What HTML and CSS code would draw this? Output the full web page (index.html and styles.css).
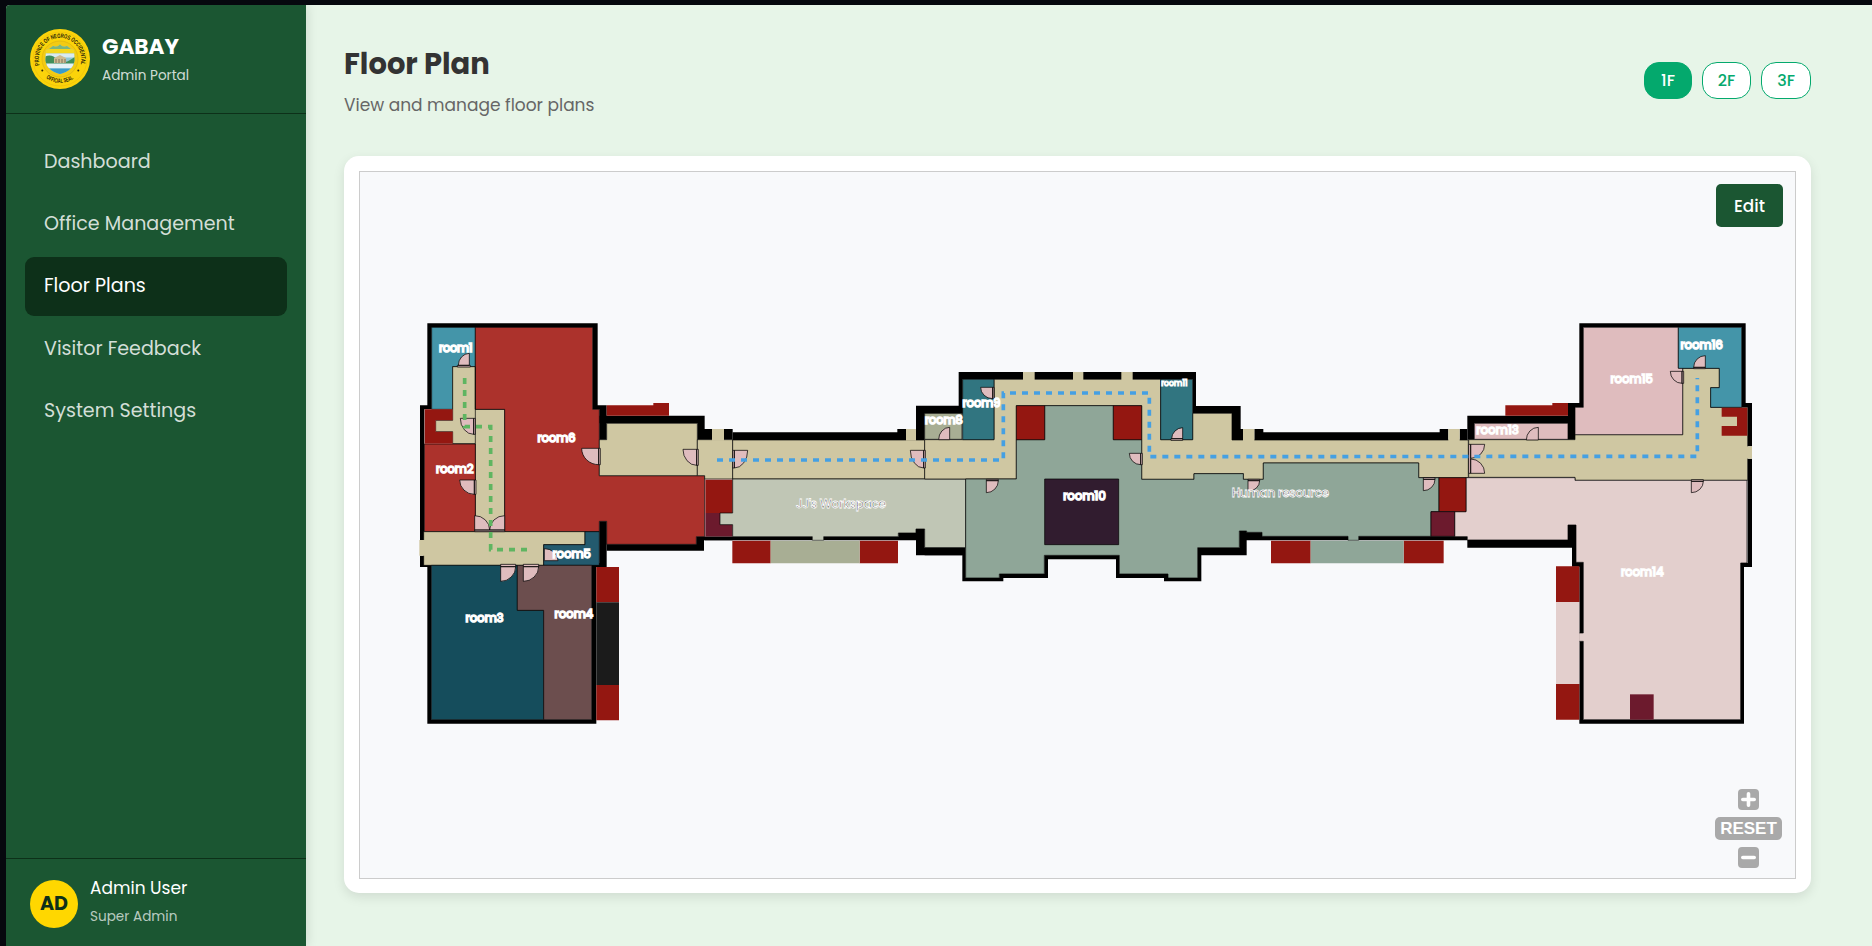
FILE: index.html
```html
<!DOCTYPE html>
<html lang="en">
<head>
<meta charset="utf-8">
<title>GABAY Admin Portal</title>
<link rel="stylesheet" href="styles.css">
</head>
<body>
<div class="app">
  <aside class="sidebar">
    <header class="brand">
      <svg class="seal" viewBox="0 0 60 60">
        <defs>
          <path id="arcTop" d="M10.200 38A21.300 21.300 0 1 1 49.800 38"/>
          <path id="arcBottom" d="M13 46.800A23.900 23.900 0 0 0 47 46.800"/>
          <clipPath id="shield"><path d="M16 21Q20 20 23 17Q27 19 30 15.500Q33 19 37 17Q40 20 44 21L44.500 31Q44 41 30 45Q16 41 15.500 31Z"/></clipPath>
        </defs>
        <circle cx="30" cy="30" r="30" fill="#fbd30a"/>
        <circle cx="30" cy="30" r="27" fill="none" stroke="#e6bb0d" stroke-width=".5"/>
        <circle cx="30" cy="30" r="18" fill="#f3cb13" stroke="#d9ae12" stroke-width=".6"/>
        <g clip-path="url(#shield)">
          <rect x="14" y="14" width="32" height="32" fill="#8fc6d4"/>
          <rect x="14" y="14" width="32" height="6" fill="#7db67c"/>
          <rect x="14" y="20" width="32" height="4.500" fill="#f4d71c"/>
          <rect x="14" y="24.500" width="32" height="4" fill="#d9eaf0"/>
          <path d="M14 28Q22 24 27 31T46 27V36H14Z" fill="#3f8e5a"/>
          <path d="M24 29L30 26L36 29V34H24Z" fill="#cdbb91"/>
          <path d="M26 30V34M29 30V34M32 30V34M35 30V34" stroke="#69604e" stroke-width=".8"/>
          <rect x="14" y="34.500" width="32" height="5" fill="#e4f2f7"/>
          <rect x="14" y="39.500" width="32" height="6" fill="#3a9bc8"/>
        </g>
        <circle cx="12.300" cy="41.500" r="1" fill="#2b2609"/><circle cx="48.300" cy="41.500" r="1" fill="#2b2609"/>
        <text class="seal-text"><textPath href="#arcTop" startOffset="2" textLength="78" lengthAdjust="spacingAndGlyphs">PROVINCE OF NEGROS OCCIDENTAL</textPath></text>
        <text class="seal-text"><textPath href="#arcBottom" startOffset="4" textLength="29" lengthAdjust="spacingAndGlyphs">OFFICIAL SEAL</textPath></text>
      </svg>
      <div class="brand-text">
        <div class="brand-name">GABAY</div>
        <div class="brand-sub">Admin Portal</div>
      </div>
    </header>
    <nav class="nav">
      <a class="nav-item">Dashboard</a>
      <a class="nav-item">Office Management</a>
      <a class="nav-item active">Floor Plans</a>
      <a class="nav-item">Visitor Feedback</a>
      <a class="nav-item">System Settings</a>
    </nav>
    <footer class="user">
      <div class="avatar">AD</div>
      <div class="user-text">
        <div class="user-name">Admin User</div>
        <div class="user-role">Super Admin</div>
      </div>
    </footer>
  </aside>
  <main class="main">
    <header class="page-head">
      <div class="titles">
        <h1 class="title">Floor Plan</h1>
        <p class="subtitle">View and manage floor plans</p>
      </div>
      <div class="floors">
        <button class="floor on">1F</button>
        <button class="floor">2F</button>
        <button class="floor">3F</button>
      </div>
    </header>
    <section class="card">
      <div class="canvas">
        <svg class="plan" viewBox="360 172 1435 706">
          <!-- west wing -->
          <g transform="translate(400 310) scale(.33333)">
            <g class="wall">
              <path d="M82 40H593V286H620V389H598V298H578V53H95V298H73V690H60V286H82Z"/>
              <path d="M60 737H72V759H94V1229H575V759H598V634H620V771H589V1241H82V771H60Z"/>
              <path d="M598 317H914V357H936V389H892V340H598Z"/>
              <path d="M620 703H889V680H998V691H912V722H620Z"/>
              <path d="M972 357H998V389H972Z"/>
            </g>
            <g class="rm">
              <path class="c-teal" d="M95 52H226V170H158V298H95Z"/>
              <path class="c-tan" d="M158 170H226V298H314V665H226V401H158V365H107V331H158Z"/>
              <path class="c-red" d="M226 52H578V298H598V497H914V680H889V703H620V634H598V665H314V298H226Z"/>
              <path class="c-red" d="M73 402H226V665H73Z"/>
              <path class="c-tan" d="M71 665H555V704H431V766H71Z"/>
              <path class="c-navy" d="M555 665H598V766H431V704H555Z"/>
              <path class="c-deep" d="M94 766H352V901H431V1229H94Z"/>
              <path class="c-brown" d="M352 766H575V1229H431V901H352Z"/>
              <path class="c-tan" d="M620 340H892V497H598V389H620Z"/>
              <path class="c-tan" d="M892 389H998V507H914V497H892Z"/>
              <path class="edge" d="M226 170V401"/>
            </g>
            <g class="flat">
              <path class="c-brick" d="M74 298H158V331H107V365H158V401H74Z"/>
              <path class="c-tan" d="M58 690H75V737H58ZM936 357H972V392H936Z"/>
              <path class="c-brick" d="M620 286H760V279H807V317H620Z"/>
              <path class="c-brick" d="M916 509H998V609H916Z"/>
              <path class="c-maroon" d="M916 609H998V680H916Z"/>
              <path class="c-brick" d="M589 771H657V877H589ZM589 1125H657V1231H589Z"/>
              <path class="c-coal" d="M589 877H657V1125H589Z"/>
            </g>
          </g>
          <!-- west connector -->
          <g transform="translate(680 390) scale(.33333)">
            <g class="wall">
              <path d="M158 127H652V117H678V150H158ZM708 47H848V71H734V150H708Z"/>
              <path d="M74 440H397V451H74ZM431 440H655V429H708V417H734V473H848V496H708V451H431Z"/>
            </g>
            <g class="rm">
              <path class="c-tan" d="M158 150H734V267H158Z"/>
              <path class="c-pale" d="M158 267H857V473H734V417H708V429H655V440H431V451H397V440H158V404H120V369H158Z"/>
            </g>
            <g class="flat">
              <path class="c-tan" d="M678 117H708V152H678Z"/>
              <path class="c-brick" d="M157 452H272V520H157ZM539 452H654V520H539Z"/>
              <path class="c-olive" d="M272 452H539V520H272Z"/>
            </g>
          </g>
          <!-- central block and east connector -->
          <g transform="translate(900 350) scale(.33333)">
            <g class="wall">
              <path d="M176 66H888V168H1022V237H1029V270H996V190H878V88H188V190H74V168H176Z"/>
              <path d="M1063 237H1090V247H1619V237H1645V270H1063ZM1679 237H1702V270H1679Z"/>
              <path d="M74 593H197V684H310V694H187V616H74Z"/>
              <path d="M298 672H433V616H658V672H804V684H648V628H444V684H298Z"/>
              <path d="M792 684H893V593H1018V543H1040V547H1086V559H1344V571H1040V616H904V694H792ZM1376 559H1702V571H1376Z"/>
            </g>
            <g class="rm">
              <path class="c-tan" d="M282 88H782V269H878V190H996V270H1705V383H1556V339H1090V388H1030V371H882V388H725V167H349V387H74V269H282Z"/>
              <path class="c-sage" d="M197 387H349V269H434V167H640V269H725V388H882V371H1030V388H1090V339H1556V383H1617V485H1593V559H1376V571H1344V559H1086V547H1040V543H1018V593H893V684H804V672H658V616H433V672H298V684H197Z"/>
              <path class="c-olive" d="M74 190H186V268H74Z"/>
              <path class="c-ocean" d="M188 88H282V269H188ZM782 88H878V269H782Z"/>
              <path class="c-plum" d="M434 387H656V584H434Z"/>
              <path class="c-brick" d="M349 167H434V269H349ZM640 167H725V269H640Z"/>
            </g>
            <g class="flat">
              <path class="c-tan" d="M369 66H404V91H369ZM519 66H550V91H519ZM664 66H698V91H664ZM1029 237H1063V273H1029ZM1645 237H1679V273H1645Z"/>
              <path class="c-brick" d="M1113 572H1232V640H1113ZM1511 572H1631V640H1511Z"/>
              <path class="c-sage" d="M1232 572H1511V640H1232Z"/>
            </g>
          </g>
          <!-- east wing -->
          <g transform="translate(1440 310) scale(.33333)">
            <g class="wall">
              <path d="M82 317H384V279H418V40H917V279H936V409H923V292H905V52H430V292H405V389H384V340H103V389H82Z"/>
              <path d="M923 446H936V771H912V1241H418V994H430V1229H901V759H923Z"/>
              <path d="M383 645H408V757H430V969H418V770H396V713H82V690H383Z"/>
            </g>
            <g class="rm">
              <path class="c-tan" d="M86 389H405V374H728V175H838V233H812V292H923V511H405V502H86Z"/>
              <path class="c-pink" d="M103 340H384V388H103Z"/>
              <path class="c-pink" d="M430 52H715V174H728V374H405V292H430Z"/>
              <path class="c-teal" d="M715 52H905V292H812V233H838V175H715Z"/>
              <path class="c-blush" d="M78 503H405V511H921V759H902V1229H430V994H416V969H430V757H408V645H384V690H82V680H44V605H78Z"/>
              <path class="c-brick" d="M-3 503H78V605H-3Z"/>
              <path class="c-maroon" d="M-27 605H44V679H-27Z"/>
            </g>
            <g class="flat">
              <path class="c-tan" d="M920 409H936V446H920Z"/>
              <path class="c-brick" d="M845 293H922V377H845V348H891V320H845Z"/>
              <path class="c-brick" d="M196 286H337V279H384V317H196Z"/>
              <path class="c-brick" d="M348 769H418V876H348ZM348 1122H418V1229H348Z"/>
              <path class="c-blush" d="M348 876H418V1122H348Z"/>
              <path class="c-maroon" d="M570 1153H641V1229H570Z"/>
            </g>
          </g>
          <!-- doors -->
          <g class="door">
            <g transform="translate(400 310) scale(.33333)">
              <path d="M175 166A34 36 0 0 1 208 130V166ZM172 166H211V171H172Z"/>
              <path d="M181 325H221V373A40 48 0 0 1 181 325ZM221 325H226V373H221Z"/>
              <path d="M179 510H223V553A44 43 0 0 1 179 510ZM223 510H228V553H223Z"/>
              <path d="M224 660V617A45 43 0 0 1 269 660ZM314 660V617A45 43 0 0 0 269 660ZM224 660H314V665H224Z"/>
              <path d="M545 415H596V464A51 49 0 0 1 545 415ZM596 415H601V464H596Z"/>
              <path d="M849 418H890V466A41 48 0 0 1 849 418ZM890 418H895V466H890Z"/>
              <path d="M433 716V752H474A41 36 0 0 0 433 716Z"/>
              <path d="M302 770H347A45 44 0 0 1 302 814ZM302 763H347V770H302Z"/>
              <path d="M370 770H416A46 44 0 0 1 370 814ZM370 763H416V770H370Z"/>
            </g>
            <g transform="translate(680 390) scale(.33333)">
              <path d="M163 181H203A40 53 0 0 1 163 234ZM158 181H163V234H158Z"/>
              <path d="M691 181H731V234A40 53 0 0 1 691 181ZM731 181H736V234H731Z"/>
              <path d="M776 149A33 37 0 0 1 809 112V149Z"/>
              <path d="M919 272H955A36 36 0 0 1 919 308ZM919 268H955V272H919Z"/>
            </g>
            <g transform="translate(900 350) scale(.33333)">
              <path d="M242 112H278V146A36 34 0 0 1 242 112ZM278 112H282V146H278Z"/>
              <path d="M688 310H722V344A34 34 0 0 1 688 310ZM722 310H727V344H722Z"/>
              <path d="M815 266A34 34 0 0 1 848 233V266ZM813 266H848V271H813Z"/>
              <path d="M1044 392H1079A35 32 0 0 1 1044 424ZM1044 388H1079V392H1044Z"/>
              <path d="M1570 388H1605A35 34 0 0 1 1570 422ZM1570 383H1605V388H1570Z"/>
            </g>
            <g transform="translate(1440 310) scale(.33333)">
              <path d="M92 403H134A42 42 0 0 1 92 445ZM92 490H134A42 43 0 0 0 92 447ZM86 403H92V490H86Z"/>
              <path d="M259 390A36 38 0 0 1 295 352V390Z"/>
              <path d="M691 184H726V220A35 36 0 0 1 691 184ZM726 184H731V220H726Z"/>
              <path d="M761 172A35 35 0 0 1 796 137V172ZM761 172H796V176H761Z"/>
              <path d="M754 514H790A36 34 0 0 1 754 548ZM754 509H790V514H754Z"/>
            </g>
          </g>
          <!-- routes -->
          <path class="route green" transform="translate(400 310) scale(.33333)" d="M194 204V350H272V719H381"/>
          <path class="route blue" transform="translate(900 350) scale(.33333)" d="M-549 330H310V129H748V320L2392 319V84"/>
          <!-- labels -->
          <g class="label">
            <g transform="translate(400 310) scale(.33333)">
              <text x="116" y="127" textLength="102">room1</text>
              <text x="107" y="489" textLength="114">room2</text>
              <text x="412" y="397" textLength="115">room6</text>
              <text x="457" y="745" textLength="116">room5</text>
              <text x="196" y="936" textLength="115">room3</text>
              <text x="463" y="924" textLength="117">room4</text>
            </g>
            <g transform="translate(680 390) scale(.33333)">
              <text x="734" y="103" textLength="115">room8</text>
              <text class="long" x="348" y="353" textLength="270">JJ's Workspace</text>
            </g>
            <g transform="translate(900 350) scale(.33333)">
              <text x="187" y="171" textLength="115">room9</text>
              <text x="489" y="450" textLength="129">room10</text>
              <text class="small" x="783" y="109" textLength="80">room11</text>
              <text class="long" x="995" y="440" textLength="292">Human resource</text>
            </g>
            <g transform="translate(1440 310) scale(.33333)">
              <text x="108" y="372" textLength="129">room13</text>
              <text x="511" y="219" textLength="128">room15</text>
              <text x="721" y="117" textLength="128">room16</text>
              <text x="542" y="799" textLength="129">room14</text>
            </g>
          </g>
        </svg>
        <button class="edit">Edit</button>
        <div class="zoom">
          <span class="zbtn"><svg viewBox="0 0 21 21"><path d="M10.500 4.800V16.200M4.800 10.500H16.200"/></svg></span>
          <span class="reset">RESET</span>
          <span class="zbtn"><svg viewBox="0 0 21 21"><path d="M4.800 10.500H16.200"/></svg></span>
        </div>
      </div>
    </section>
  </main>
</div>
</body>
</html>
```
FILE: styles.css
```css
* { box-sizing: border-box; margin: 0; }
html { height: 100%; overflow: hidden; }
body {
  background: #06080e;
  padding: 5px 0 0 6px;
  height: 100%;
  overflow: hidden;
  font-family: Poppins, Inter, "Open Sans", sans-serif;
}
.app { display: flex; height: 100%; background: #e7f5e8; border-top-left-radius: 4px; overflow: hidden; }

.sidebar {
  width: 300px; flex: none; display: flex; flex-direction: column;
  background: #1b5632; color: #fff; position: relative; z-index: 1;
  box-shadow: 2px 0 10px rgba(0,0,0,.1);
}
.brand { display: flex; align-items: center; gap: 12px; padding: 24px; height: 109px; border-bottom: 1px solid #0d3019; }
.seal { width: 60px; height: 60px; flex: none; }
.seal-text { font: 700 6.2px "Liberation Sans", sans-serif; fill: #2b2609; }
.brand-text { padding-top: 2px; }
.brand-name { font-size: 21.600px; font-weight: 700; line-height: 31px; }
.brand-sub { font-size: 13.600px; line-height: 27px; color: rgba(255,255,255,.8); }
.nav { flex: 1; display: flex; flex-direction: column; gap: 4px; padding: 19px; }
.nav-item { height: 58.200px; flex: none; line-height: 57px; padding-left: 19px; border-radius: 9px; font-size: 19.100px; color: rgba(255,255,255,.82); white-space: nowrap; }
.nav-item.active { background: #0d3019; color: #fff; }
.user { height: 88px; flex: none; display: flex; gap: 12px; padding: 21px 24px; border-top: 1px solid #0d3019; }
.avatar { width: 48px; height: 48px; border-radius: 50%; background: #ffd700; color: #0d3019; font-size: 19.200px; font-weight: 700; line-height: 48px; text-align: center; }
.user-name { font-size: 17px; line-height: 20px; margin-top: -2px; }
.user-role { font-size: 13.600px; line-height: 22px; margin-top: 8px; color: rgba(255,255,255,.7); }

.main { flex: 1; padding: 38px 61px 53px 38px; display: flex; flex-direction: column; }
.page-head { display: flex; justify-content: space-between; align-items: flex-start; height: 113px; flex: none; }
.title { font-size: 29px; line-height: 43px; font-weight: 700; color: #333; }
.subtitle { font-size: 17px; line-height: 26px; margin-top: 6px; color: #666; }
.floors { display: flex; gap: 10px; margin-top: 19px; }
.floor { height: 37px; width: 49px; padding: 0; border: 1px solid #04a96d; border-radius: 15px; background: #fff; color: #04a96d; font: 500 16px/35px Poppins, Inter, sans-serif; }
.floor.on { background: #04a96d; color: #fff; width: 48px; }
.floor:last-child { width: 50px; }

.card { flex: none; height: 737px; padding: 15px; background: #fff; border-radius: 15px; box-shadow: 0 4px 12px rgba(0,0,0,.1); }
.canvas { position: relative; width: 1437px; height: 708px; border: 1px solid #ccc; background: #f8f9fb; }
.plan { display: block; width: 1435px; height: 706px; }
.edit { position: absolute; top: 12px; right: 12px; width: 67px; height: 43px; padding: 0; border: 0; border-radius: 5px; background: #1b5632; color: #fff; font: 500 16.800px/42px Poppins, Inter, sans-serif; }
.zoom { position: absolute; right: 13px; bottom: 10px; display: flex; flex-direction: column; align-items: center; gap: 7px; }
.zbtn { width: 21px; height: 21px; border-radius: 4px; background: #a9a9a9; }
.zbtn svg { display: block; fill: none; stroke: #fff; stroke-width: 3.600; stroke-linecap: round; }
.reset { width: 67px; height: 23px; border-radius: 5px; background: #a9a9a9; color: #fff; font: 700 17px/23px "Liberation Sans", sans-serif; text-align: center; }

.rm path { stroke: rgba(0,0,0,.68); stroke-width: 3; }
.rm .edge { fill: none; }
.c-teal { fill: #4495a9; }
.c-tan { fill: #cfc7a2; }
.c-red { fill: #ac322c; }
.c-brick { fill: #941711; }
.c-maroon { fill: #6c1a2d; }
.c-navy { fill: #235a6e; }
.c-deep { fill: #154d5c; }
.c-brown { fill: #6c4e4e; }
.c-coal { fill: #1b1b1b; }
.c-pale { fill: #c0c6b5; }
.c-olive { fill: #a8ae94; }
.c-sage { fill: #8fa698; }
.c-ocean { fill: #317580; }
.c-plum { fill: #311c2f; }
.c-pink { fill: #dfbcbe; }
.c-blush { fill: #e3cfcd; }
.door path { fill: #dfbcbe; stroke: rgba(0,0,0,.72); stroke-width: 3; }
.route { fill: none; stroke-width: 11; stroke-dasharray: 18 18; }
.route.green { stroke: #5fb561; }
.route.blue { stroke: #45a0e3; }
.label text { font-size: 36px; font-weight: 500; fill: #000; stroke: #fff; stroke-width: 4; }
.label .small { font-size: 25px; stroke-width: 3; }
.label .long { font-weight: 500; stroke-width: 2.600; }
```
